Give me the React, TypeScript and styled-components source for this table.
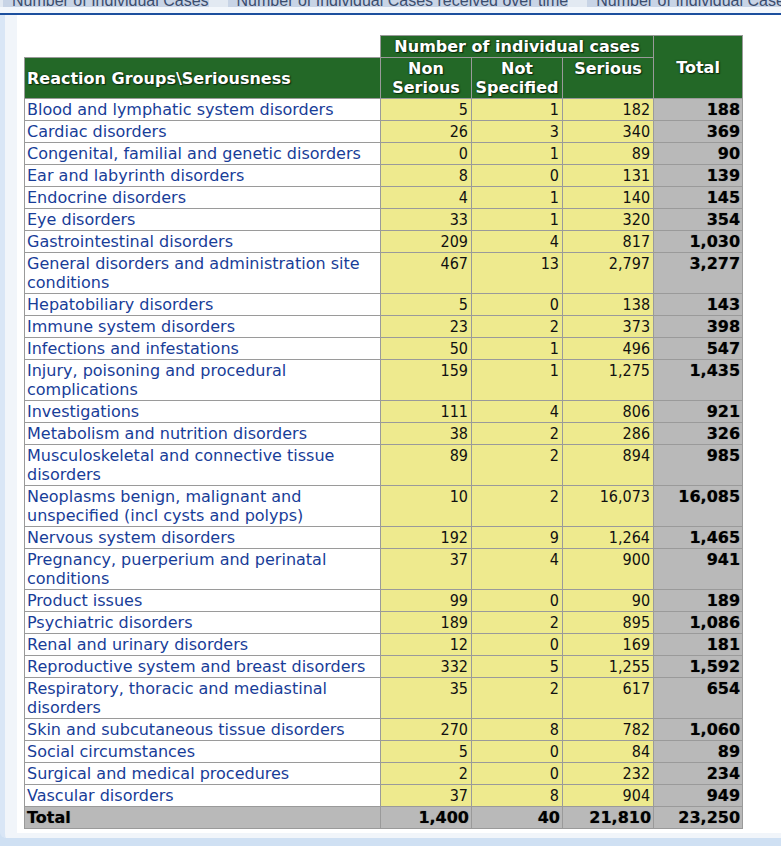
import styled, { createGlobalStyle } from "styled-components";

const GlobalStyle = createGlobalStyle`
  html, body {
    margin: 0;
    padding: 0;
    background: #cfe0f3;
  }
`;

const Page = styled.div`
  width: 781px;
  min-height: 846px;
  background: #cfe0f3;
  overflow: hidden;
`;

const TabBar = styled.div`
  display: flex;
  height: 7px;
  overflow: hidden;
  background: #e2e9f2;
  padding-left: 3px;
`;

const Tab = styled.div`
  flex: none;
  margin-top: -8px;
  margin-right: 19px;
  padding: 0 0 0 9px;
  height: 18px;
  background: #c8d4e6;
  font-family: "Liberation Sans", Arial, sans-serif;
  font-size: 16px;
  line-height: 18px;
  color: #3b4d6e;
  white-space: nowrap;
`;

const Rule = styled.div`
  height: 6px;
  background: #f3f7fc;
  border-bottom: 2px solid #1c4f9e;
`;

const Panel = styled.div`
  border-left: 5px solid #d9e6f6;
  border-bottom-left-radius: 6px;
  background: #f1f5fa;
  padding: 0 0 5px 12px;
`;

const Sheet = styled.div`
  background: #fff;
  padding: 20px 0 4px 7px;
`;

const Table = styled.table`
  border-collapse: collapse;
  table-layout: fixed;
  width: 718px;
  font-family: "DejaVu Sans", Verdana, sans-serif;
  font-size: 16px;
  line-height: 19px;
`;

const Corner = styled.td`
  padding: 0;
  border: none;
  background: #fff;
`;

type HeadProps = {
  $align?: "left" | "center";
  $valign?: "top" | "middle";
};
const HeadCell = styled.th<HeadProps>`
  background: #236827;
  color: #fff;
  font-weight: bold;
  text-align: ${(p) => p.$align || "center"};
  vertical-align: ${(p) => p.$valign || "middle"};
  border: 1px solid #9a9a9a;
  padding: 1px 2px;
  text-shadow: 0 0 2px #0b2a0c, 1px 1px 1px #0b2a0c;
  white-space: pre;
`;

const LabelCell = styled.td`
  color: #183d98;
  background: #fff;
  border: 1px solid #9a9a9a;
  padding: 1px 2px;
  vertical-align: top;
  white-space: pre;
`;

const NumCell = styled.td`
  background: #eeea8e;
  color: #111;
  border: 1px solid #9a9a9a;
  padding: 1px 3px;
  text-align: right;
  vertical-align: top;
  font-family: "DejaVu Sans Condensed", "Liberation Sans", sans-serif;
`;

type TotalProps = { $left?: boolean };
const TotalCell = styled.td<TotalProps>`
  background: #b9b9b9;
  color: #000;
  border: 1px solid #9a9a9a;
  padding: 1px 2px;
  text-align: ${(p) => (p.$left ? "left" : "right")};
  vertical-align: top;
  font-weight: bold;
  text-shadow: 0 0 1px rgba(0, 0, 0, 0.45);
`;

type Row = [string, string, string, string, string];

const rows: Row[] = [
  ["Blood and lymphatic system disorders", "5", "1", "182", "188"],
  ["Cardiac disorders", "26", "3", "340", "369"],
  ["Congenital, familial and genetic disorders", "0", "1", "89", "90"],
  ["Ear and labyrinth disorders", "8", "0", "131", "139"],
  ["Endocrine disorders", "4", "1", "140", "145"],
  ["Eye disorders", "33", "1", "320", "354"],
  ["Gastrointestinal disorders", "209", "4", "817", "1,030"],
  ["General disorders and administration site\nconditions", "467", "13", "2,797", "3,277"],
  ["Hepatobiliary disorders", "5", "0", "138", "143"],
  ["Immune system disorders", "23", "2", "373", "398"],
  ["Infections and infestations", "50", "1", "496", "547"],
  ["Injury, poisoning and procedural\ncomplications", "159", "1", "1,275", "1,435"],
  ["Investigations", "111", "4", "806", "921"],
  ["Metabolism and nutrition disorders", "38", "2", "286", "326"],
  ["Musculoskeletal and connective tissue\ndisorders", "89", "2", "894", "985"],
  ["Neoplasms benign, malignant and\nunspecified (incl cysts and polyps)", "10", "2", "16,073", "16,085"],
  ["Nervous system disorders", "192", "9", "1,264", "1,465"],
  ["Pregnancy, puerperium and perinatal\nconditions", "37", "4", "900", "941"],
  ["Product issues", "99", "0", "90", "189"],
  ["Psychiatric disorders", "189", "2", "895", "1,086"],
  ["Renal and urinary disorders", "12", "0", "169", "181"],
  ["Reproductive system and breast disorders", "332", "5", "1,255", "1,592"],
  ["Respiratory, thoracic and mediastinal\ndisorders", "35", "2", "617", "654"],
  ["Skin and subcutaneous tissue disorders", "270", "8", "782", "1,060"],
  ["Social circumstances", "5", "0", "84", "89"],
  ["Surgical and medical procedures", "2", "0", "232", "234"],
  ["Vascular disorders", "37", "8", "904", "949"],
];

const tabs = [
  "Number of Individual Cases",
  "Number of Individual Cases received over time",
  "Number of Individual Cases by EEA countries",
];

export default function App() {
  return (
    <Page>
      <GlobalStyle />
      <TabBar>
        {tabs.map((t) => (
          <Tab key={t}>{t}</Tab>
        ))}
      </TabBar>
      <Rule />
      <Panel>
        <Sheet>
          <Table>
            <colgroup>
              <col style={{ width: 356 }} />
              <col style={{ width: 91 }} />
              <col style={{ width: 91 }} />
              <col style={{ width: 91 }} />
              <col style={{ width: 89 }} />
            </colgroup>
            <thead>
              <tr>
                <Corner />
                <HeadCell colSpan={3}>Number of individual cases</HeadCell>
                <HeadCell rowSpan={2}>Total</HeadCell>
              </tr>
              <tr>
                <HeadCell $align="left">Reaction Groups\Seriousness</HeadCell>
                <HeadCell $valign="top">{"Non\nSerious"}</HeadCell>
                <HeadCell $valign="top">{"Not\nSpecified"}</HeadCell>
                <HeadCell $valign="top">Serious</HeadCell>
              </tr>
            </thead>
            <tbody>
              {rows.map(([label, non, notSpec, serious, total]) => (
                <tr key={label}>
                  <LabelCell>{label}</LabelCell>
                  <NumCell>{non}</NumCell>
                  <NumCell>{notSpec}</NumCell>
                  <NumCell>{serious}</NumCell>
                  <TotalCell>{total}</TotalCell>
                </tr>
              ))}
              <tr>
                <TotalCell $left>Total</TotalCell>
                <TotalCell>1,400</TotalCell>
                <TotalCell>40</TotalCell>
                <TotalCell>21,810</TotalCell>
                <TotalCell>23,250</TotalCell>
              </tr>
            </tbody>
          </Table>
        </Sheet>
      </Panel>
    </Page>
  );
}
